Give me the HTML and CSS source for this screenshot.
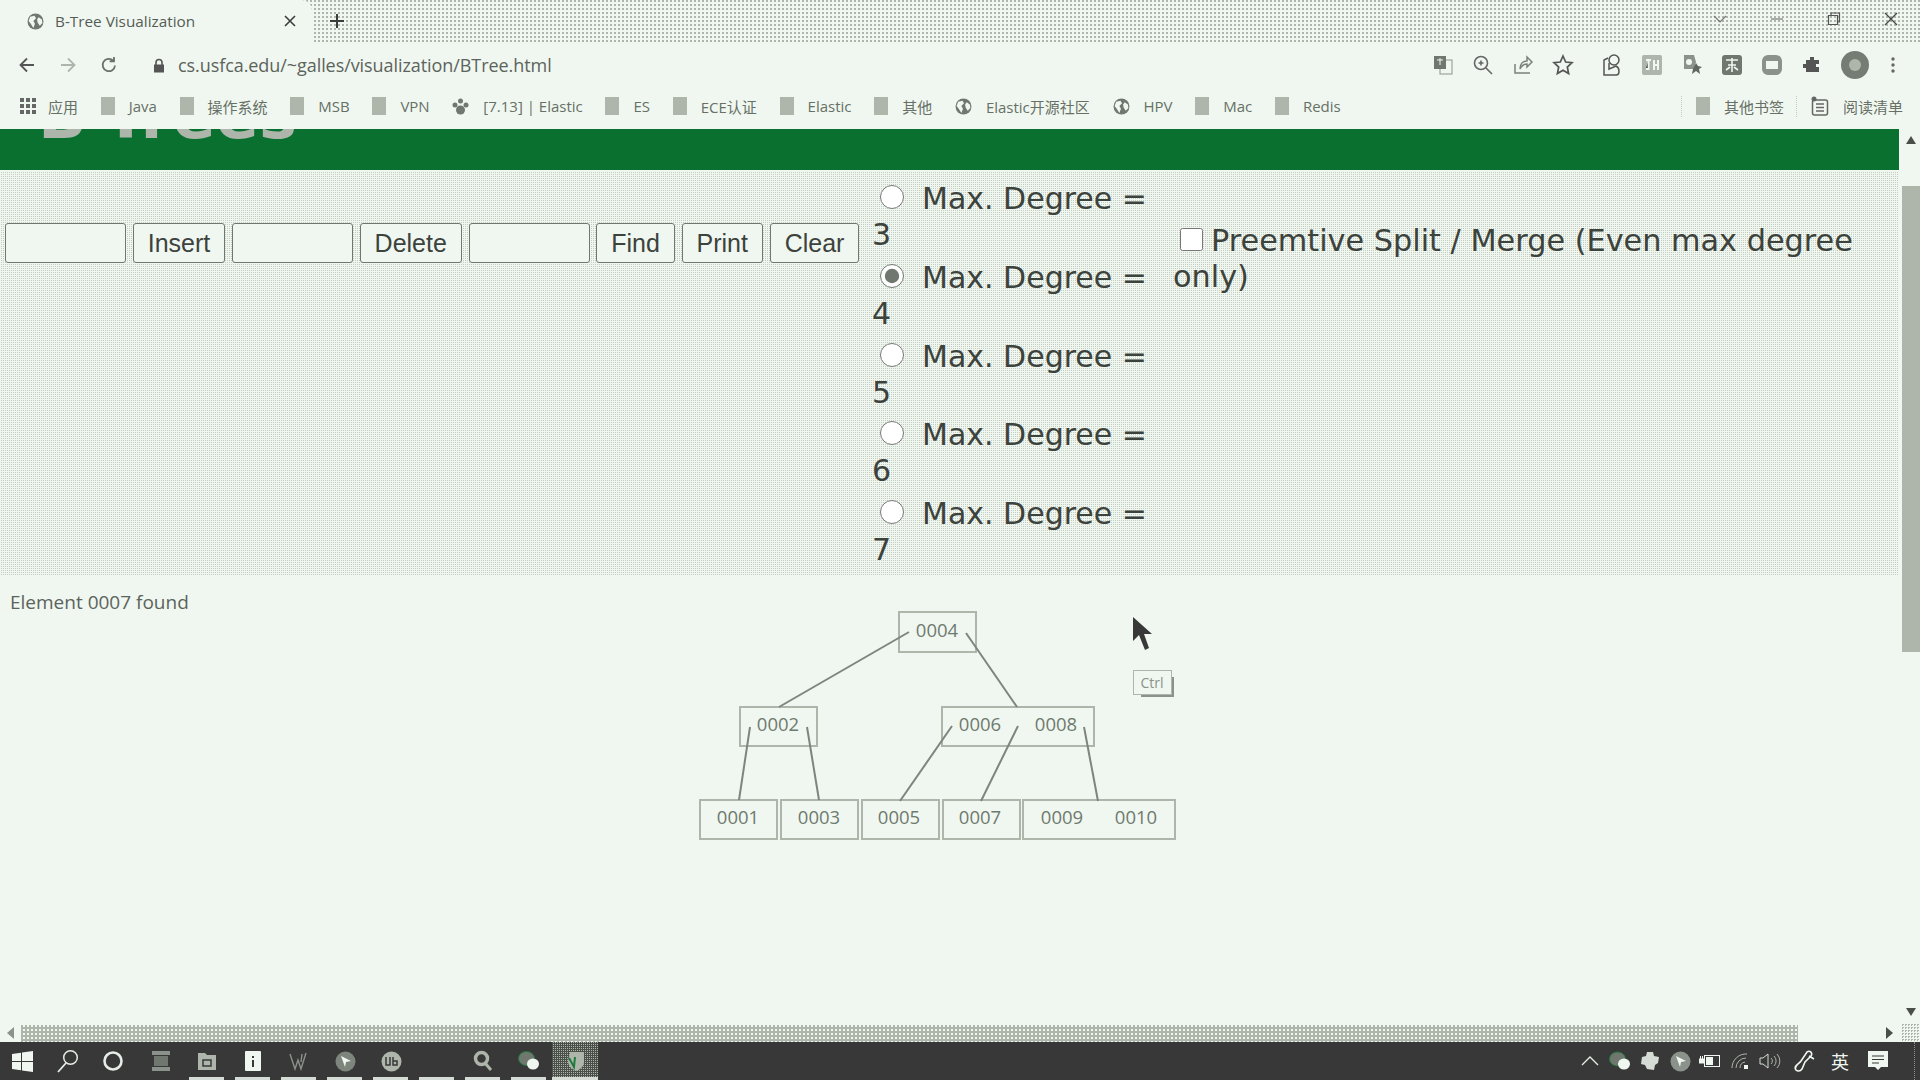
FILE: index.html
```html
<!DOCTYPE html>
<html lang="zh-CN">
<head>
  <meta charset="UTF-8">
  <title>B-Tree Visualization</title>
  <link rel="stylesheet" href="styles.css">
</head>
<body>

  <svg class="defs" width="0" height="0">
    <symbol id="globe" viewBox="0 0 16 16">
      <circle cx="8" cy="8" r="7.5" fill="#6f776f"/>
      <path d="M3 3.5 7 2.5 8.5 5 6 7.5 7.5 10 6 14 3.5 10 1.5 7.5ZM11 4 14 6 14.5 9.5 12 12 10 9 9.5 6Z" fill="#f0f7f0"/>
    </symbol>
  </svg>

  <div class="tabstrip">
    <div class="tab">
      <svg class="tab-icon" width="17" height="17"><use href="#globe"/></svg>
      <span class="tab-title">B-Tree Visualization</span>
      <svg class="tab-close" width="14" height="14" viewBox="0 0 14 14"><path d="M2 2 12 12M12 2 2 12" stroke="#3c3c3c" stroke-width="1.6"/></svg>
    </div>
    <svg class="new-tab" width="16" height="16" viewBox="0 0 16 16"><path d="M8 1V15M1 8H15" stroke="#3c3c3c" stroke-width="2"/></svg>
    <div class="window-controls">
      <svg width="14" height="14" viewBox="0 0 14 14"><path d="M1 4 7 10 13 4" fill="none" stroke="#777" stroke-width="1.2"/></svg>
      <svg width="14" height="14" viewBox="0 0 14 14"><path d="M1 7H13" stroke="#777" stroke-width="1.2"/></svg>
      <svg width="14" height="14" viewBox="0 0 14 14"><path d="M1.5 3.5H10.5V12.5H1.5ZM4 3.5V1H12.5V10H10.5" fill="none" stroke="#555" stroke-width="1.2"/></svg>
      <svg width="14" height="14" viewBox="0 0 14 14"><path d="M1 1 13 13M13 1 1 13" stroke="#444" stroke-width="1.2"/></svg>
    </div>
  </div>

  <div class="toolbar">
    <svg class="nav" width="20" height="20" viewBox="0 0 20 20"><path d="M17 10H4M10 3.5 3.5 10 10 16.5" fill="none" stroke="#555" stroke-width="1.8"/></svg>
    <svg class="nav" width="20" height="20" viewBox="0 0 20 20"><path d="M3 10H16M10 3.5 16.5 10 10 16.5" fill="none" stroke="#aeb5aa" stroke-width="1.8"/></svg>
    <svg class="nav" width="20" height="20" viewBox="0 0 20 20"><path d="M16 10.5A6.2 6.2 0 1 1 14.2 5.6M15 2V6.4H10.6" fill="none" stroke="#6a716a" stroke-width="1.8"/></svg>
    <svg class="lock" width="12" height="15" viewBox="0 0 12 15"><path d="M3 7V4.5A3 3 0 0 1 9 4.5V7" fill="none" stroke="#555" stroke-width="1.6"/><rect x="1" y="6.5" width="10" height="8" fill="#555"/></svg>
    <span class="url">cs.usfca.edu/~galles/visualization/BTree.html</span>
    <div class="extensions">
      <svg width="22" height="22" viewBox="0 0 22 22"><rect x="8" y="6" width="12" height="14" fill="#f0f7f0" stroke="#8b928b"/><rect x="2" y="2" width="12" height="13" fill="#6f776f"/><path d="M5 6H11M8 4V11" stroke="#f0f7f0"/></svg>
      <svg width="22" height="22" viewBox="0 0 22 22"><circle cx="9" cy="9" r="6.5" fill="none" stroke="#666" stroke-width="1.6"/><path d="M14 14 20 20M6.5 9H11.500M9 6.500V11.500" stroke="#666" stroke-width="1.6"/></svg>
      <svg width="22" height="22" viewBox="0 0 22 22"><path d="M3 10V19H18M8 15C8 10 11 7 15 7V3L20 8 15 13V10C12 10 10 11 8 15Z" fill="none" stroke="#7a817a" stroke-width="1.5"/></svg>
      <svg width="22" height="22" viewBox="0 0 22 22"><path d="M11 2 13.700 8 20 8.700 15.300 13 16.600 19.500 11 16.200 5.400 19.500 6.700 13 2 8.700 8.300 8Z" fill="none" stroke="#555" stroke-width="1.7"/></svg>
      <svg class="ext-gap" width="22" height="24" viewBox="0 0 22 24"><circle cx="13" cy="7" r="5" fill="none" stroke="#555" stroke-width="1.5"/><path d="M7 5 3 7V22H15C19 22 19 15 15 13L8 16V10" fill="none" stroke="#555" stroke-width="1.500"/></svg>
      <svg width="22" height="22" viewBox="0 0 22 22"><rect x="1" y="1" width="20" height="20" rx="2" fill="#aeb5aa"/><path d="M5 6H10M7.500 6V15H5M13 6V16M17 6V16M13 11H17" stroke="#f0f7f0" stroke-width="2"/></svg>
      <svg width="22" height="22" viewBox="0 0 22 22"><path d="M3 1H13L15 8 13 15H3Z" fill="#8b928b"/><path d="M15 9 17 12 21 13 18 15 19 20 15 17 11 20 12 15Z" fill="#5f665f"/><circle cx="8" cy="8" r="3" fill="#f0f7f0"/></svg>
      <svg width="22" height="22" viewBox="0 0 22 22"><rect x="1" y="1" width="20" height="20" rx="3" fill="#6f776f"/><path d="M5 6H17M11 4V18M7 11H15M5 16 9 13M17 16 13 13" stroke="#f0f7f0" stroke-width="1.600"/></svg>
      <svg width="22" height="22" viewBox="0 0 22 22"><rect x="1" y="1" width="20" height="20" rx="6" fill="#8b928b"/><rect x="5" y="7" width="12" height="8" fill="#f0f7f0"/></svg>
      <svg width="22" height="22" viewBox="0 0 22 22"><path d="M9 3H13V6H18V10H15V13H18V18H5V14H2V10H5V6H9Z" fill="#555"/></svg>
      <svg class="avatar" width="28" height="28" viewBox="0 0 28 28"><circle cx="14" cy="14" r="14" fill="#747c74"/><circle cx="14" cy="14" r="6" fill="#aeb5aa"/></svg>
      <svg width="4" height="18" viewBox="0 0 4 18"><circle cx="2" cy="3" r="1.700" fill="#666"/><circle cx="2" cy="9" r="1.700" fill="#666"/><circle cx="2" cy="15" r="1.700" fill="#666"/></svg>
    </div>
  </div>

  <div class="bookmarks">
    <div class="bm apps-bm">
      <svg width="16" height="16" viewBox="0 0 16 16" fill="#666"><rect width="4" height="4"/><rect x="6" width="4" height="4"/><rect x="12" width="4" height="4"/><rect y="6" width="4" height="4"/><rect x="6" y="6" width="4" height="4"/><rect x="12" y="6" width="4" height="4"/><rect y="12" width="4" height="4"/><rect x="6" y="12" width="4" height="4"/><rect x="12" y="12" width="4" height="4"/></svg>
      <span>应用</span>
    </div>
    <div class="bm"><i class="page"></i><span>Java</span></div>
    <div class="bm"><i class="page"></i><span>操作系统</span></div>
    <div class="bm"><i class="page"></i><span>MSB</span></div>
    <div class="bm"><i class="page"></i><span>VPN</span></div>
    <div class="bm">
      <svg width="17" height="17" viewBox="0 0 17 17" fill="#6f776f"><circle cx="8.500" cy="3" r="2.500"/><circle cx="3" cy="7" r="2.500"/><circle cx="14" cy="7" r="2.500"/><circle cx="8.500" cy="12" r="4.500"/></svg>
      <span>[7.13] | Elastic</span>
    </div>
    <div class="bm"><i class="page"></i><span>ES</span></div>
    <div class="bm"><i class="page"></i><span>ECE认证</span></div>
    <div class="bm"><i class="page"></i><span>Elastic</span></div>
    <div class="bm"><i class="page"></i><span>其他</span></div>
    <div class="bm"><svg width="17" height="17"><use href="#globe"/></svg><span>Elastic开源社区</span></div>
    <div class="bm"><svg width="17" height="17"><use href="#globe"/></svg><span>HPV</span></div>
    <div class="bm"><i class="page"></i><span>Mac</span></div>
    <div class="bm"><i class="page"></i><span>Redis</span></div>
    <div class="bm-right">
      <div class="bm bm-sep"><i class="page"></i><span>其他书签</span></div>
      <div class="bm bm-sep">
        <svg width="18" height="20" viewBox="0 0 18 20"><circle cx="3" cy="3" r="2.500" fill="#666"/><rect x="1.500" y="4" width="15" height="15" rx="2" fill="none" stroke="#666" stroke-width="1.500"/><path d="M5 8H13M5 11.500H13M5 15H13" stroke="#666" stroke-width="1.500"/></svg>
        <span>阅读清单</span>
      </div>
    </div>
  </div>

  <div class="viewport">
    <div class="page-area">
      <header class="banner"><h1>B-Trees</h1></header>

      <div class="panel">
        <div class="controls">
          <input type="text" class="field">
          <button>Insert</button>
          <input type="text" class="field">
          <button>Delete</button>
          <input type="text" class="field">
          <button>Find</button>
          <button>Print</button>
          <button>Clear</button>
        </div>
        <div class="degrees">
          <label class="degree"><input type="radio" name="degree">Max. Degree = 3</label>
          <label class="degree"><input type="radio" name="degree" checked>Max. Degree = 4</label>
          <label class="degree"><input type="radio" name="degree">Max. Degree = 5</label>
          <label class="degree"><input type="radio" name="degree">Max. Degree = 6</label>
          <label class="degree"><input type="radio" name="degree">Max. Degree = 7</label>
        </div>
        <label class="preempt"><input type="checkbox">Preemtive Split / Merge (Even max degree only)</label>
      </div>

      <div class="canvas">
        <p class="status">Element 0007 found</p>
        <svg class="tree" viewBox="0 575 1899 449">
          <g class="boxes">
            <rect x="899" y="612" width="77" height="40"/>
            <rect x="740" y="707" width="77" height="39"/>
            <rect x="942" y="707" width="152" height="39"/>
            <rect x="700" y="800" width="77" height="39"/>
            <rect x="781" y="800" width="77" height="39"/>
            <rect x="862" y="800" width="77" height="39"/>
            <rect x="943" y="800" width="77" height="39"/>
            <rect x="1023" y="800" width="152" height="39"/>
          </g>
          <g class="edges">
            <line x1="909" y1="632" x2="779" y2="707"/>
            <line x1="966" y1="633" x2="1017" y2="707"/>
            <line x1="750" y1="727" x2="739" y2="800"/>
            <line x1="807" y1="727" x2="819" y2="800"/>
            <line x1="952" y1="726" x2="900" y2="801"/>
            <line x1="1018" y1="726" x2="981" y2="801"/>
            <line x1="1084" y1="727" x2="1098" y2="801"/>
          </g>
          <g class="keys">
            <text x="937" y="637">0004</text>
            <text x="778" y="731">0002</text>
            <text x="980" y="731">0006</text>
            <text x="1056" y="731">0008</text>
            <text x="738" y="824">0001</text>
            <text x="819" y="824">0003</text>
            <text x="899" y="824">0005</text>
            <text x="980" y="824">0007</text>
            <text x="1062" y="824">0009</text>
            <text x="1136" y="824">0010</text>
          </g>
          <path class="pointer" d="M1133 617V641L1139 635 1145 650 1149 648 1144 634H1152Z"/>
          <g class="key-hint">
            <path class="key-shadow" d="M1172 677H1174V697H1141V695H1172Z"/>
            <rect x="1133.500" y="670.500" width="38" height="24"/>
            <text x="1152" y="688">Ctrl</text>
          </g>
        </svg>
      </div>

      <div class="hscroll">
        <svg width="8" height="12" viewBox="0 0 8 12"><path d="M7 0V12L0 6Z" fill="#8b928b"/></svg>
        <div class="hthumb"></div>
        <svg class="harrow-right" width="8" height="12" viewBox="0 0 8 12"><path d="M1 0V12L8 6Z" fill="#4a4f4a"/></svg>
      </div>
    </div>

    <div class="vscroll">
      <svg width="10" height="8" viewBox="0 0 10 8"><path d="M0 8H10L5 0Z" fill="#4a4f4a"/></svg>
      <div class="vthumb"></div>
      <svg class="varrow-down" width="10" height="8" viewBox="0 0 10 8"><path d="M0 0H10L5 8Z" fill="#4a4f4a"/></svg>
      <div class="corner"></div>
    </div>
  </div>

  <footer class="taskbar">
    <div class="task-sys">
      <div class="sys-cell"><svg width="21" height="21" viewBox="0 0 21 21" fill="#f0f7f0"><path d="M0 3 9 1.700V10H0ZM10 1.500 21 0V10H10ZM0 11H9V19.300L0 18ZM10 11H21V21L10 19.500Z"/></svg></div>
      <div class="sys-cell"><svg width="22" height="24" viewBox="0 0 22 24"><circle cx="13.500" cy="8.500" r="6.800" fill="none" stroke="#e6ece6" stroke-width="1.500"/><path d="M9 14 1 23" stroke="#e6ece6" stroke-width="1.800"/></svg></div>
      <div class="sys-cell"><svg width="22" height="22" viewBox="0 0 22 22"><circle cx="11" cy="11" r="8.500" fill="none" stroke="#e6ece6" stroke-width="2.600"/></svg></div>
    </div>
    <div class="task-apps">
      <div class="app"><svg width="20" height="22" viewBox="0 0 20 22"><rect x="1" y="1" width="18" height="4" fill="#8b928b"/><rect x="3" y="6" width="14" height="10" fill="#6f776f"/><rect x="1" y="17" width="18" height="4" fill="#8b928b"/></svg></div>
      <div class="app running"><svg width="20" height="20" viewBox="0 0 20 20"><path d="M1 2H8L10 4H19V19H1Z" fill="#aeb5aa"/><path d="M6 9H14V15H6Z" fill="none" stroke="#383838" stroke-width="1.500"/></svg></div>
      <div class="app running"><svg width="18" height="22" viewBox="0 0 18 22"><rect x="1" y="1" width="16" height="20" rx="1" fill="#f0f7f0"/><path d="M8 6H10V8H8ZM8 10H10V17H8Z" fill="#383838"/></svg></div>
      <div class="app running"><svg width="20" height="20" viewBox="0 0 20 20"><path d="M1 3 6 18 9 9 12 18 17 2M13 3 12 11" fill="none" stroke="#8b928b" stroke-width="1.400"/></svg></div>
      <div class="app running"><svg width="21" height="21" viewBox="0 0 21 21"><circle cx="10.500" cy="10.500" r="10" fill="#7d857d"/><path d="M6 5 16 10 11 11 10 16Z" fill="#f0f7f0"/></svg></div>
      <div class="app running"><svg width="21" height="21" viewBox="0 0 21 21"><circle cx="10.500" cy="10.500" r="10" fill="#aeb5aa"/><path d="M5 6V14H9V6M12 6V14H16V10H12" fill="none" stroke="#383838" stroke-width="1.500"/></svg></div>
      <div class="app running"></div>
      <div class="app running"><svg width="20" height="22" viewBox="0 0 20 22"><circle cx="8.500" cy="8.500" r="6" fill="none" stroke="#aeb5aa" stroke-width="3.500"/><path d="M12 13 18 20" stroke="#aeb5aa" stroke-width="3"/></svg></div>
      <div class="app running"><svg width="22" height="22" viewBox="0 0 22 22"><ellipse cx="8.500" cy="8.500" rx="8" ry="7" fill="#6f776f" stroke="#1f7a3f"/><ellipse cx="15" cy="14" rx="6" ry="5.500" fill="#f0f7f0"/></svg></div>
      <div class="app active running"><svg width="20" height="22" viewBox="0 0 20 22"><path d="M5 2H19V12C19 17 14 20 11 21 7 19 3 16 3 11Z" fill="#aeb5aa"/><path d="M4 8 9 17 10 7" fill="none" stroke="#1f7a3f" stroke-width="2"/></svg></div>
    </div>
    <div class="tray">
      <div class="tray-cell"><svg width="18" height="10" viewBox="0 0 18 10"><path d="M1 9 9 1 17 9" fill="none" stroke="#e6ece6" stroke-width="1.300"/></svg></div>
      <div class="tray-cell"><svg width="22" height="20" viewBox="0 0 22 20"><ellipse cx="8.500" cy="8" rx="8" ry="7" fill="#6f776f" stroke="#1f7a3f"/><ellipse cx="15" cy="13" rx="6" ry="5.500" fill="#f0f7f0"/></svg></div>
      <div class="tray-cell"><svg width="20" height="20" viewBox="0 0 20 20"><path d="M7 1H13L14 5 19 6 18 12 15 14 14 19 7 18 5 14 1 13 2 6 6 5Z" fill="#d5dcd5"/></svg></div>
      <div class="tray-cell"><svg width="21" height="21" viewBox="0 0 21 21"><circle cx="10.500" cy="10.500" r="10" fill="#8b928b"/><path d="M6 5 16 10 11 11 10 16Z" fill="#f0f7f0"/></svg></div>
      <div class="tray-cell"><svg width="22" height="14" viewBox="0 0 22 14"><rect x="5.500" y="1.500" width="15" height="11" fill="none" stroke="#f0f7f0"/><rect x="7" y="3" width="7" height="8" fill="#f0f7f0"/><path d="M0 5H5V9H0ZM1.500 2V5M3.500 2V5" fill="#f0f7f0" stroke="#f0f7f0"/></svg></div>
      <div class="tray-cell"><svg width="18" height="16" viewBox="0 0 18 16"><path d="M1 15A14 14 0 0 1 16 1M5 15A10 10 0 0 1 15 5M9 15A6 6 0 0 1 14 9" fill="none" stroke="#aeb5aa"/><rect x="13" y="12" width="4" height="4" fill="#f0f7f0"/></svg></div>
      <div class="tray-cell"><svg width="22" height="18" viewBox="0 0 22 18"><path d="M1 6H4L9 2V16L4 12H1Z" fill="none" stroke="#d5dcd5"/><path d="M12 6A4 4 0 0 1 12 12M15 4A7 7 0 0 1 15 14M18 2A10 10 0 0 1 18 16" fill="none" stroke="#aeb5aa"/></svg></div>
      <div class="tray-cell pen"><svg width="22" height="22" viewBox="0 0 22 22"><path d="M3 20C0 16 6 14 8 11L14 2C17 0 20 3 18 6L12 12 9 19C7 22 4 21 3 20ZM16 6 21 9" fill="none" stroke="#f0f7f0" stroke-width="1.600"/></svg></div>
      <div class="tray-cell ime">英</div>
      <div class="tray-cell notify"><svg width="20" height="20" viewBox="0 0 20 20"><path d="M0 0H20V16H13L10 19 7 16H0Z" fill="#f0f7f0"/><path d="M4 5H16M4 8.500H16M4 12H11" stroke="#383838"/></svg></div>
    </div>
  </footer>

</body>
</html>
```

FILE: styles.css
```css
* {
  box-sizing: border-box;
}

html, body {
  height: 100%;
}

body {
  margin: 0;
  height: 1080px;
  display: flex;
  flex-direction: column;
  overflow: hidden;
  background-color: #f0f7f0;
  color: #3c423c;
  font-family: "Open Sans", "Noto Sans CJK SC", sans-serif;
}

.defs {
  position: absolute;
}

/* browser chrome */
.tabstrip {
  flex: 0 0 42px;
  display: flex;
  align-items: center;
  background: conic-gradient(#aeb5aa 25%, #f0f7f0 0) 0 0 / 4px 4px;
}

.tab {
  width: 312px;
  height: 42px;
  display: flex;
  align-items: center;
  padding-left: 27px;
  background-color: #f0f7f0;
  border-radius: 0 10px 0 0;
}

.tab-title {
  margin-left: 11px;
  width: 228px;
  font-size: 15.3px;
  color: #555c55;
}

.new-tab {
  margin-left: 17px;
}

.window-controls {
  margin-left: auto;
  display: flex;
  gap: 43px;
  margin-right: 22px;
  margin-top: -4px;
}

.toolbar {
  flex: 0 0 46px;
  display: flex;
  align-items: center;
  padding-left: 17px;
  gap: 21px;
}

.lock {
  margin-left: 13px;
  margin-right: -8px;
}

.url {
  font-size: 18px;
  color: #5c635c;
  letter-spacing: -0.07px;
}

.extensions {
  margin-left: auto;
  display: flex;
  align-items: center;
  gap: 18px;
  padding-right: 25px;
}

.ext-gap {
  margin-left: 9px;
}

.avatar {
  margin-right: 4px;
}

.bookmarks {
  flex: 0 0 41px;
  display: flex;
  align-items: center;
  gap: 22.7px;
  padding: 0 0 5px 20px;
  font-size: 15px;
  color: #667066;
}

.bm {
  display: flex;
  align-items: center;
  gap: 14px;
  white-space: nowrap;
}

.apps-bm {
  gap: 12px;
}

.page {
  width: 14px;
  height: 18px;
  background-color: #aeb5aa;
}

.bm-right {
  margin-left: auto;
  display: flex;
  padding-right: 17px;
  gap: 12px;
}

.bm-sep {
  border-left: 1px dotted #c4ccc0;
  padding-left: 14px;
}

/* page */
.viewport {
  flex: 1;
  min-height: 0;
  display: flex;
}

.page-area {
  flex: 1;
  min-width: 0;
  display: flex;
  flex-direction: column;
}

.banner {
  flex: 0 0 41px;
  overflow: hidden;
  padding-left: 38px;
  background-color: #0a7030;
}

.banner h1 {
  margin: -45px 0 0;
  font-family: "DejaVu Sans", sans-serif;
  font-size: 64px;
  line-height: 64px;
  color: #aeb5aa;
}

.panel {
  margin-top: 2px;
  flex: 0 0 403px;
  display: flex;
  padding-top: 9px;
  background: conic-gradient(#c4ccc0 25%, #f0f7f0 0) 0 0 / 2px 2px;
  font-family: "DejaVu Sans", sans-serif;
  font-size: 30px;
  line-height: 36px;
  color: #3c423c;
}

.controls {
  flex: 0 0 872px;
  display: flex;
  align-items: flex-start;
  gap: 6.7px;
  padding: 42px 0 0 5px;
}

.field {
  width: 121px;
  height: 40px;
  border: 1px solid #6f776f;
  border-radius: 3px;
  background-color: #f0f7f0;
}

button {
  height: 40px;
  padding: 0 14px;
  border: 1px solid #6f776f;
  border-radius: 3px;
  background-color: #f0f7f0;
  color: #3c423c;
  font-family: "Liberation Sans", sans-serif;
  font-size: 25px;
}

.degrees {
  flex: 0 0 301px;
}

.degree {
  display: block;
  width: 285px;
  margin-bottom: 6.8px;
}

.degree input {
  width: 24px;
  height: 24px;
  margin: 0 18px 0 8px;
  vertical-align: 0;
  accent-color: #6f776f;
}

.preempt {
  flex: 0 0 700px;
  padding-top: 42px;
  font-size: 30.3px;
}

.preempt input {
  width: 23px;
  height: 23px;
  margin: 0 8px 0 7px;
  vertical-align: 0;
}

/* animation canvas */
.canvas {
  flex: 1;
  min-height: 0;
  position: relative;
}

.status {
  margin: 15px 0 0 10px;
  font-size: 19px;
  line-height: 24px;
  color: #5c635c;
}

.tree {
  position: absolute;
  left: 0;
  top: 0;
  width: 100%;
  height: 100%;
}

.boxes rect {
  fill: none;
  stroke: #aeb5aa;
  stroke-width: 2;
}

.edges line {
  stroke: #7d857d;
  stroke-width: 2;
}

.keys text {
  font-family: "Open Sans", sans-serif;
  font-size: 18.5px;
  text-anchor: middle;
  fill: #6f7a6f;
}

.pointer {
  fill: #383838;
}

.key-hint rect {
  fill: #f0f7f0;
  stroke: #aeb5aa;
}

.key-shadow {
  fill: #8b928b;
}

.key-hint text {
  font-family: "Open Sans", sans-serif;
  font-size: 14px;
  text-anchor: middle;
  fill: #8b928b;
}

.hscroll {
  flex: 0 0 18px;
  display: flex;
  align-items: center;
  padding-left: 7px;
}

.hthumb {
  width: 1777px;
  height: 17px;
  margin-left: 6px;
  background: conic-gradient(#f0f7f0 25%, #aeb5aa 0) 0 0 / 4px 4px;
}

.harrow-right {
  margin-left: 87px;
}

.vscroll {
  flex: 0 0 21px;
  display: flex;
  flex-direction: column;
  align-items: center;
  padding: 7px 0 0 2px;
}

.vthumb {
  width: 18px;
  height: 466px;
  margin-top: 42px;
  background-color: #aeb5aa;
}

.varrow-down {
  margin-top: auto;
  margin-bottom: 8px;
}

.corner {
  width: 19px;
  height: 18px;
  background: conic-gradient(#aeb5aa 25%, #f0f7f0 0) 0 0 / 3px 3px;
}

/* windows taskbar */
.taskbar {
  flex: 0 0 38px;
  display: flex;
  background-color: #383838;
}

.task-sys {
  display: flex;
}

.sys-cell {
  width: 45px;
  display: flex;
  align-items: center;
  justify-content: center;
}

.task-apps {
  display: flex;
  margin-left: 3px;
}

.app {
  position: relative;
  width: 46px;
  display: flex;
  align-items: center;
  justify-content: center;
}

.running::after {
  content: "";
  position: absolute;
  left: 5px;
  right: 6px;
  bottom: 0;
  height: 3px;
  background-color: #d5dcd5;
}

.active {
  background: conic-gradient(#aeb5aa 25%, #4a4f4a 0) 0 0 / 2px 2px;
}

.active::after {
  left: 0;
  right: 0;
}

.tray {
  margin-left: auto;
  display: flex;
  align-items: center;
  height: 38px;
  margin-right: 5px;
  padding-right: 15px;
  border-right: 1px dotted #8b928b;
}

.tray-cell {
  width: 30px;
  display: flex;
  justify-content: center;
}

.pen {
  width: 38px;
}

.ime {
  width: 34px;
  font-family: "Noto Sans CJK SC", sans-serif;
  font-size: 18px;
  line-height: 24px;
  color: #f0f7f0;
}

.notify {
  width: 42px;
}
```
